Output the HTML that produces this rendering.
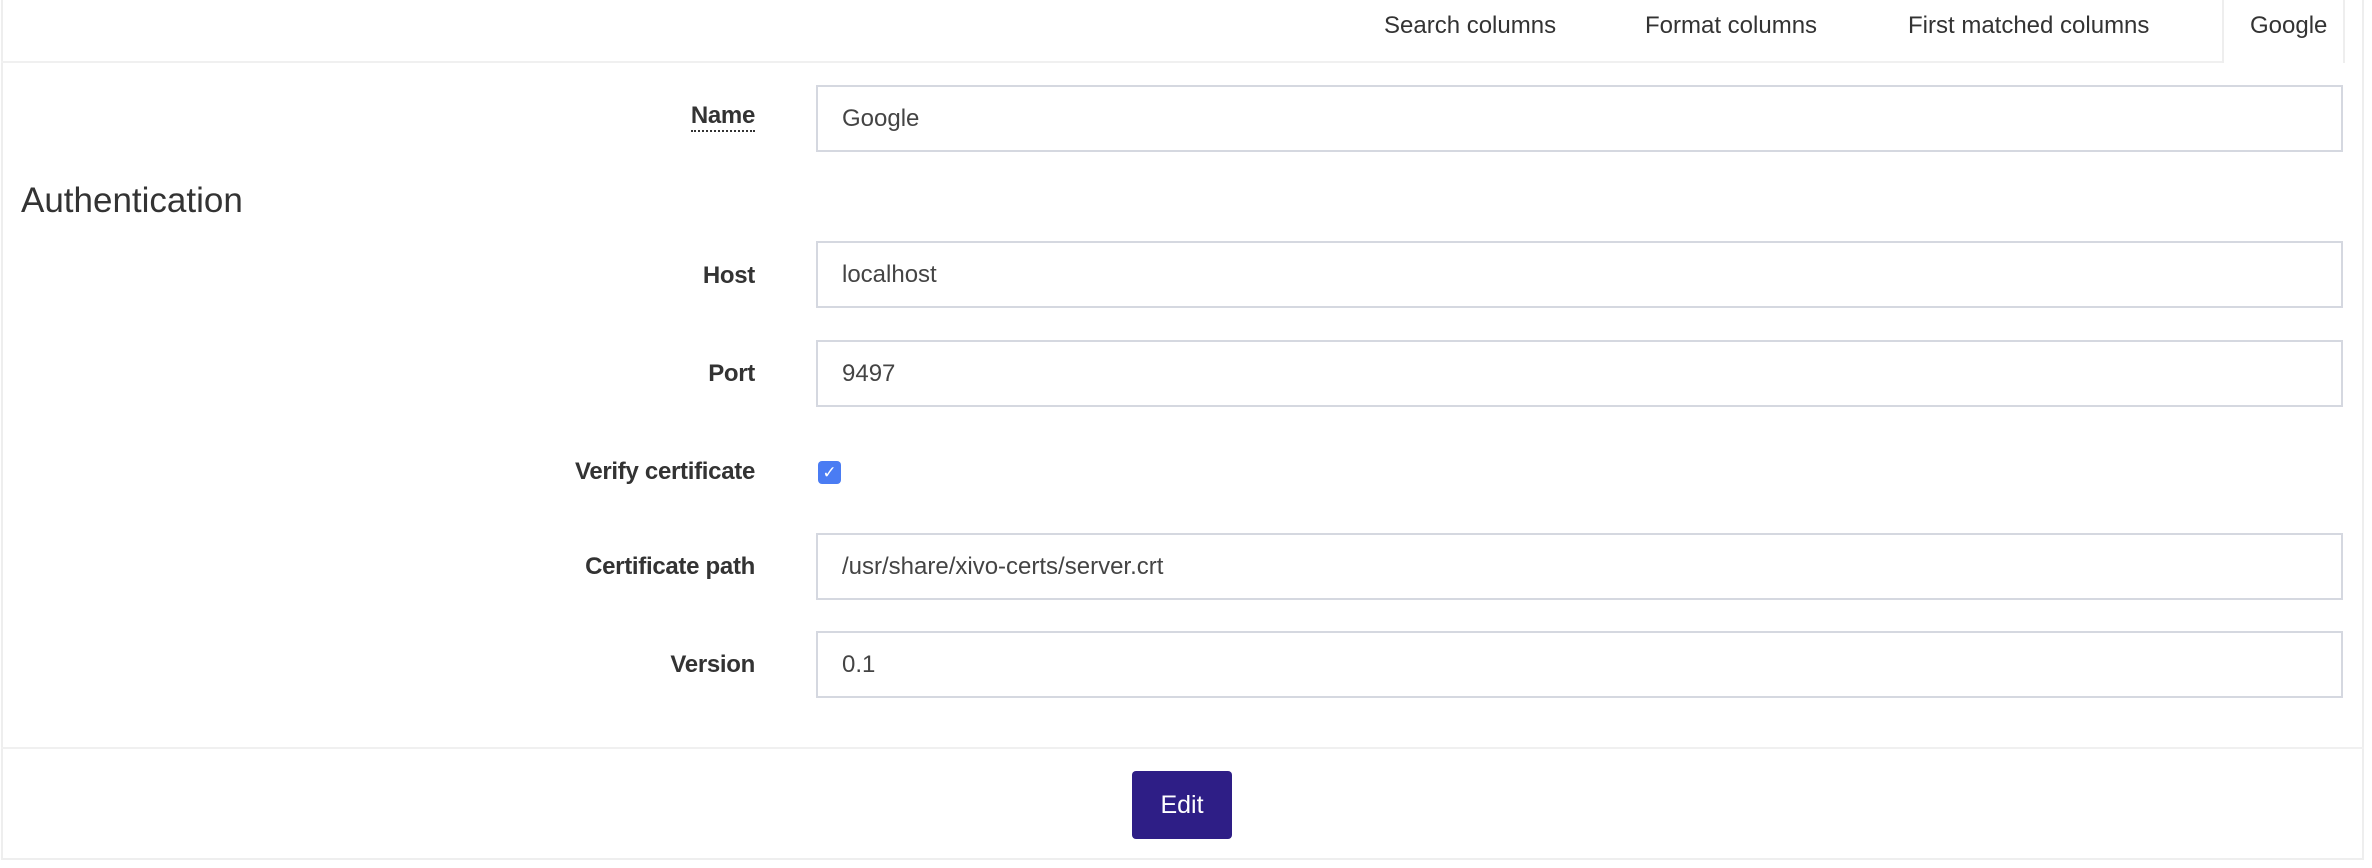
<!DOCTYPE html>
<html><head><style>
*{box-sizing:border-box;margin:0;padding:0}
body{width:2372px;height:868px;background:#fff;font-family:"Liberation Sans",sans-serif;color:#333;position:relative;overflow:hidden}
.abs{position:absolute}
.card{left:1px;top:-2px;width:2363px;height:862px;border:2px solid #eee;border-top:none}
.tabline{left:1px;top:61px;width:2222px;height:2px;background:#f0f0f0}
.gtab{left:2222px;top:0;width:123px;height:63px;border-left:2px solid #eee;border-right:2px solid #eee;background:#fff}
.tab{top:10px;font-size:24px;color:#333;line-height:32px}
.lbl{right:1617px;font-size:24px;font-weight:bold;color:#333;line-height:32px;text-align:right;letter-spacing:-0.3px}
.inp{left:816px;width:1527px;height:67px;border:2px solid #d5d8e0;font-size:24px;color:#444;padding-left:24px;line-height:63px}
</style></head><body>
<div class="abs card"></div>
<div class="abs tabline"></div>
<div class="abs gtab"></div>
<div class="abs tab" style="left:1384px">Search columns</div>
<div class="abs tab" style="left:1645px">Format columns</div>
<div class="abs tab" style="left:1908px">First matched columns</div>
<div class="abs tab" style="left:2250px">Google</div>

<div class="abs lbl" style="top:102px;border-bottom:2px dotted #333;line-height:28px">Name</div>
<div class="abs inp" style="top:85px">Google</div>

<div class="abs" style="left:21px;top:181px;font-size:35px;line-height:40px;color:#333">Authentication</div>

<div class="abs lbl" style="top:260px">Host</div>
<div class="abs inp" style="top:241px">localhost</div>
<div class="abs lbl" style="top:358px">Port</div>
<div class="abs inp" style="top:340px">9497</div>
<div class="abs lbl" style="top:456px">Verify certificate</div>
<div class="abs" style="left:818px;top:461px;width:23px;height:23px;background:#4a7cf3;border-radius:4px;color:#fff;font-size:17px;line-height:23px;text-align:center">✓</div>
<div class="abs lbl" style="top:551px">Certificate path</div>
<div class="abs inp" style="top:533px">/usr/share/xivo-certs/server.crt</div>
<div class="abs lbl" style="top:649px">Version</div>
<div class="abs inp" style="top:631px">0.1</div>

<div class="abs" style="left:1px;top:747px;width:2363px;height:2px;background:#f0f0f0"></div>
<div class="abs" style="left:1132px;top:771px;width:100px;height:68px;background:#2e1e86;border-radius:4px;color:#fff;font-size:25px;line-height:68px;text-align:center">Edit</div>
</body></html>
